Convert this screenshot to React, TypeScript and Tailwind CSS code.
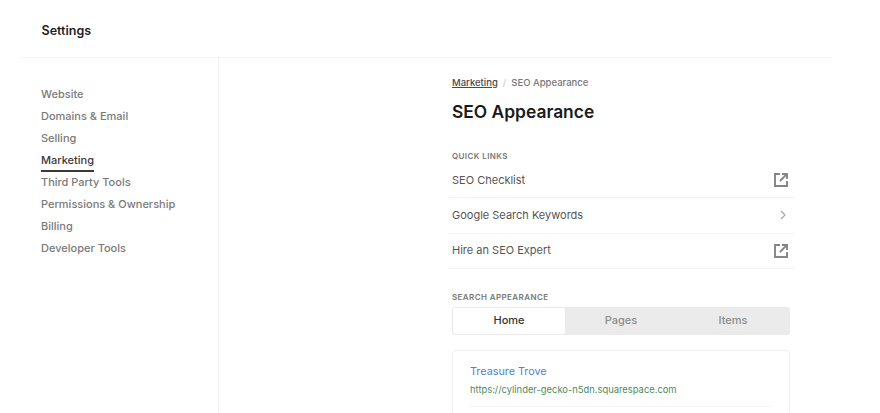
const navItems = ['Website', 'Domains & Email', 'Selling', 'Marketing', 'Third Party Tools', 'Permissions & Ownership', 'Billing', 'Developer Tools']

function ExternalIcon() {
  return (
    <svg width="14" height="14" viewBox="0 0 14 14" fill="none" stroke="#858585" strokeWidth="1.9">
      <path d="M6 1H1v12h12V8" />
      <path d="M6 8l6-6.2M8 1h5v5" />
    </svg>
  )
}

function ChevronIcon() {
  return (
    <svg width="6" height="10" viewBox="0 0 6 10" fill="none" stroke="#a6a6a6" strokeWidth="1.2">
      <path d="M1 1l4 4-4 4" />
    </svg>
  )
}

const quickLinks = [
  { label: 'SEO Checklist', icon: <ExternalIcon /> },
  { label: 'Google Search Keywords', icon: <ChevronIcon /> },
  { label: 'Hire an SEO Expert', icon: <ExternalIcon /> },
]

export default function App() {
  return (
    <div className="h-[413px] w-[880px] overflow-hidden bg-white font-['Inter',sans-serif]">
      <div className="ml-5 flex h-[58px] w-[812px] items-center border-b border-[#f3f3f3] pl-[21.5px] pt-[5px]">
        <h1 className="text-[12.5px] font-semibold text-[#1f1f1f]">Settings</h1>
      </div>
      <div className="ml-5 flex h-[355px]">
        <nav className="w-[199px] border-r border-[#f3f3f3] pl-[21px] pt-[25px]">
          {navItems.map((item) => (
            <div key={item} className="h-[22px] text-[11px] font-medium leading-[22px]">
              <span className={item === 'Marketing' ? 'inline-block h-[23px] border-b-2 border-[#3a3a3a] text-[#3a3a3a]' : 'text-[#7a7a7a]'}>{item}</span>
            </div>
          ))}
        </nav>
        <main className="ml-[229px] w-[346px] pt-[19px]">
          <div className="flex items-center pl-[4px] text-[9.5px] font-medium leading-3">
            <span className="text-[#4a4a4a] underline">Marketing</span>
            <span className="mx-[5px] text-[#cfcfcf]">/</span>
            <span className="text-[#777777]">SEO Appearance</span>
          </div>
          <h2 className="mt-[10.5px] pl-[4px] text-[17.4px] font-semibold leading-[24px] text-[#1a1a1a]">SEO Appearance</h2>
          <p className="mt-[27.5px] pl-[4px] text-[8px] font-semibold leading-[10px] tracking-[0.4px] text-[#777777]">QUICK LINKS</p>
          <ul className="mt-[2px]">
            {quickLinks.map((link, i) => (
              <li key={link.label} className="flex h-[35.3px] items-center justify-between border-b border-[#f3f3f3] pl-[4px] pr-[5px] text-[11px] text-[#555555]">
                {link.label}
                <span className={i === 1 ? 'flex w-[14px] justify-end pr-[3px]' : 'flex w-[14px] -translate-x-[1px] justify-end'}>{link.icon}</span>
              </li>
            ))}
          </ul>
          <p className="mt-[23px] pl-[4px] text-[8px] font-semibold leading-[10px] tracking-[0.4px] text-[#777777]">SEARCH APPEARANCE</p>
          <div className="ml-[4px] mt-[5px] flex h-[28px] w-[338px] rounded-[3px] bg-[#ebebeb] p-[1px] text-[11px] font-medium">
            <div className="flex w-[112px] items-center justify-center rounded-[2px] bg-white pb-[2px] text-[#333333]">Home</div>
            <div className="flex w-[112px] items-center justify-center pb-[2px] text-[#8c8c8c]">Pages</div>
            <div className="flex w-[112px] items-center justify-center pb-[2px] text-[#8c8c8c]">Items</div>
          </div>
          <div className="ml-[4px] mt-[15px] h-[80px] w-[338px] rounded-[4px] border border-[#f0f0f0] px-[17px] pt-[13px]">
            <p className="text-[10.8px] leading-[16px] text-[#4f7fe0]">Treasure Trove</p>
            <p className="mt-[3px] text-[9.4px] leading-[14px] text-[#4d8a5f]">https://cylinder-gecko-n5dn.squarespace.com</p>
            <div className="mt-[9px] border-t border-[#f3f3f3]" />
          </div>
        </main>
      </div>
    </div>
  )
}
